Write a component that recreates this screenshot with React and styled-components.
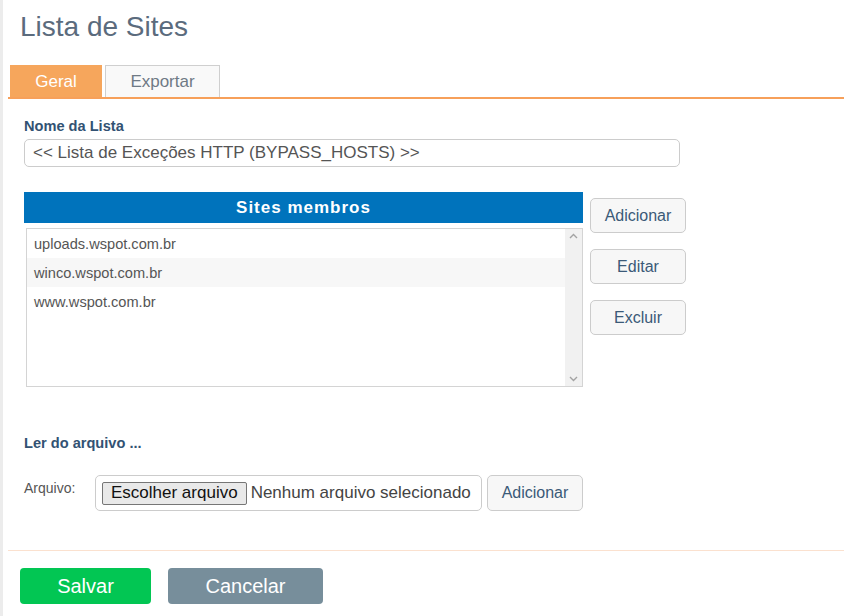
import styled, { createGlobalStyle } from "styled-components";

const GlobalStyle = createGlobalStyle`
  body {
    margin: 0;
    background: #fff;
    font-family: "Liberation Sans", Arial, sans-serif;
  }
`;

const Page = styled.div`
  border-left: 3px solid #ececec;
  min-height: 616px;
  box-sizing: border-box;
  padding-left: 5px;
`;

const Title = styled.h1`
  margin: 0;
  padding: 11px 0 0 12px;
  height: 53px;
  box-sizing: border-box;
  font-size: 28px;
  line-height: 32px;
  font-weight: normal;
  color: #5b6b7d;
`;

const TabBar = styled.div`
  display: flex;
  gap: 3px;
  padding-left: 2px;
  margin-top: 12px;
  border-bottom: 2px solid #f7a05a;
`;

const Tab = styled.div`
  width: ${(p) => p.$w}px;
  height: 32px;
  box-sizing: border-box;
  display: flex;
  align-items: center;
  justify-content: center;
  font-size: 17px;
  color: ${(p) => (p.$active ? "#fff" : "#6f7a85")};
  background: ${(p) => (p.$active ? "#f6a65c" : "#f9f9f9")};
  border: 1px solid ${(p) => (p.$active ? "#f6a65c" : "#cfcfcf")};
  border-bottom: none;
`;

const Body = styled.div`
  padding: 19px 0 0 16px;
`;

const Label = styled.div`
  font-size: 14.6px;
  font-weight: bold;
  color: #325273;
  line-height: 16px;
`;

const TextInput = styled.div`
  margin-top: 5px;
  width: 656px;
  height: 28px;
  box-sizing: border-box;
  border: 1px solid #cccccc;
  border-radius: 5px;
  padding: 0 8px;
  display: flex;
  align-items: center;
  font-size: 17px;
  color: #555;
`;

const MembersRow = styled.div`
  display: flex;
  gap: 7px;
  margin-top: 25px;
`;

const Members = styled.div`
  width: 559px;
`;

const MembersHeader = styled.div`
  height: 31px;
  background: #0073bc;
  color: #fff;
  font-weight: bold;
  font-size: 17px;
  letter-spacing: 1px;
  display: flex;
  align-items: center;
  justify-content: center;
`;

const ListBox = styled.div`
  margin: 5px 0 0 2px;
  height: 159px;
  box-sizing: border-box;
  border: 1px solid #d4d4d4;
  display: flex;
`;

const Items = styled.div`
  flex: 1;
`;

const Item = styled.div`
  height: 29px;
  display: flex;
  align-items: center;
  padding-left: 7px;
  font-size: 14.6px;
  color: #555;
  background: ${(p) => (p.$alt ? "#f7f7f7" : "transparent")};
`;

const Scrollbar = styled.div`
  width: 17px;
  background: #f1f1f1;
  display: flex;
  flex-direction: column;
  justify-content: space-between;
  align-items: center;
  padding: 4px 0;
`;

const SideButtons = styled.div`
  display: flex;
  flex-direction: column;
  gap: 16px;
  padding-top: 6px;
`;

const Button = styled.button`
  width: ${(p) => p.$w || 96}px;
  height: ${(p) => p.$h || 35}px;
  border: 1px solid #cccccc;
  border-radius: 5px;
  background: #f7f7f7;
  color: #3b5a78;
  font-family: inherit;
  font-size: 16px;
  padding: 0;
`;

const FileSection = styled.div`
  margin-top: 48px;
`;

const FileRow = styled.div`
  display: flex;
  align-items: flex-start;
  margin-top: 24px;
`;

const SmallLabel = styled.div`
  width: 71px;
  font-size: 14px;
  color: #555;
  padding-top: 5px;
`;

const FileBox = styled.div`
  width: 387px;
  height: 36px;
  box-sizing: border-box;
  border: 1px solid #cccccc;
  border-radius: 5px;
  display: flex;
  align-items: center;
  padding-left: 6px;
  gap: 4px;
  font-size: 17px;
  color: #444;
  margin-right: 5px;
`;

const ChooseButton = styled.span`
  height: 23px;
  box-sizing: border-box;
  padding: 0 8px;
  display: flex;
  align-items: center;
  background: #e9e9e9;
  border: 1px solid #767676;
  border-radius: 2px;
  color: #111;
  font-size: 17px;
`;

const Divider = styled.div`
  margin-top: 39px;
  border-top: 1px solid #fbe1cf;
`;

const Actions = styled.div`
  display: flex;
  gap: 17px;
  padding: 17px 0 0 12px;
`;

const ActionButton = styled.button`
  width: ${(p) => p.$w}px;
  height: 36px;
  border: none;
  border-radius: 4px;
  background: ${(p) => p.$bg};
  color: #fff;
  font-family: inherit;
  font-size: 20px;
  padding: 0;
`;

function Chevron({ up }) {
  return (
    <svg width="9" height="6" viewBox="0 0 9 6">
      <path
        d={up ? "M1 5 L4.5 1.5 L8 5" : "M1 1 L4.5 4.5 L8 1"}
        fill="none"
        stroke="#a3a3a3"
        strokeWidth="1.4"
      />
    </svg>
  );
}

const sites = ["uploads.wspot.com.br", "winco.wspot.com.br", "www.wspot.com.br"];

export default function App() {
  return (
    <>
      <GlobalStyle />
      <Page>
        <Title>Lista de Sites</Title>
        <TabBar>
          <Tab $active $w={92}>Geral</Tab>
          <Tab $w={115}>Exportar</Tab>
        </TabBar>
        <Body>
          <Label>Nome da Lista</Label>
          <TextInput>&lt;&lt; Lista de Exceções HTTP (BYPASS_HOSTS) &gt;&gt;</TextInput>
          <MembersRow>
            <Members>
              <MembersHeader>Sites membros</MembersHeader>
              <ListBox>
                <Items>
                  {sites.map((s, i) => (
                    <Item key={s} $alt={i === 1}>
                      {s}
                    </Item>
                  ))}
                </Items>
                <Scrollbar>
                  <Chevron up />
                  <Chevron />
                </Scrollbar>
              </ListBox>
            </Members>
            <SideButtons>
              <Button>Adicionar</Button>
              <Button>Editar</Button>
              <Button>Excluir</Button>
            </SideButtons>
          </MembersRow>
          <FileSection>
            <Label>Ler do arquivo ...</Label>
            <FileRow>
              <SmallLabel>Arquivo:</SmallLabel>
              <FileBox>
                <ChooseButton>Escolher arquivo</ChooseButton>
                Nenhum arquivo selecionado
              </FileBox>
              <Button $h={36}>Adicionar</Button>
            </FileRow>
          </FileSection>
        </Body>
        <Divider />
        <Actions>
          <ActionButton $w={131} $bg="#02c653">Salvar</ActionButton>
          <ActionButton $w={155} $bg="#778e9b">Cancelar</ActionButton>
        </Actions>
      </Page>
    </>
  );
}
